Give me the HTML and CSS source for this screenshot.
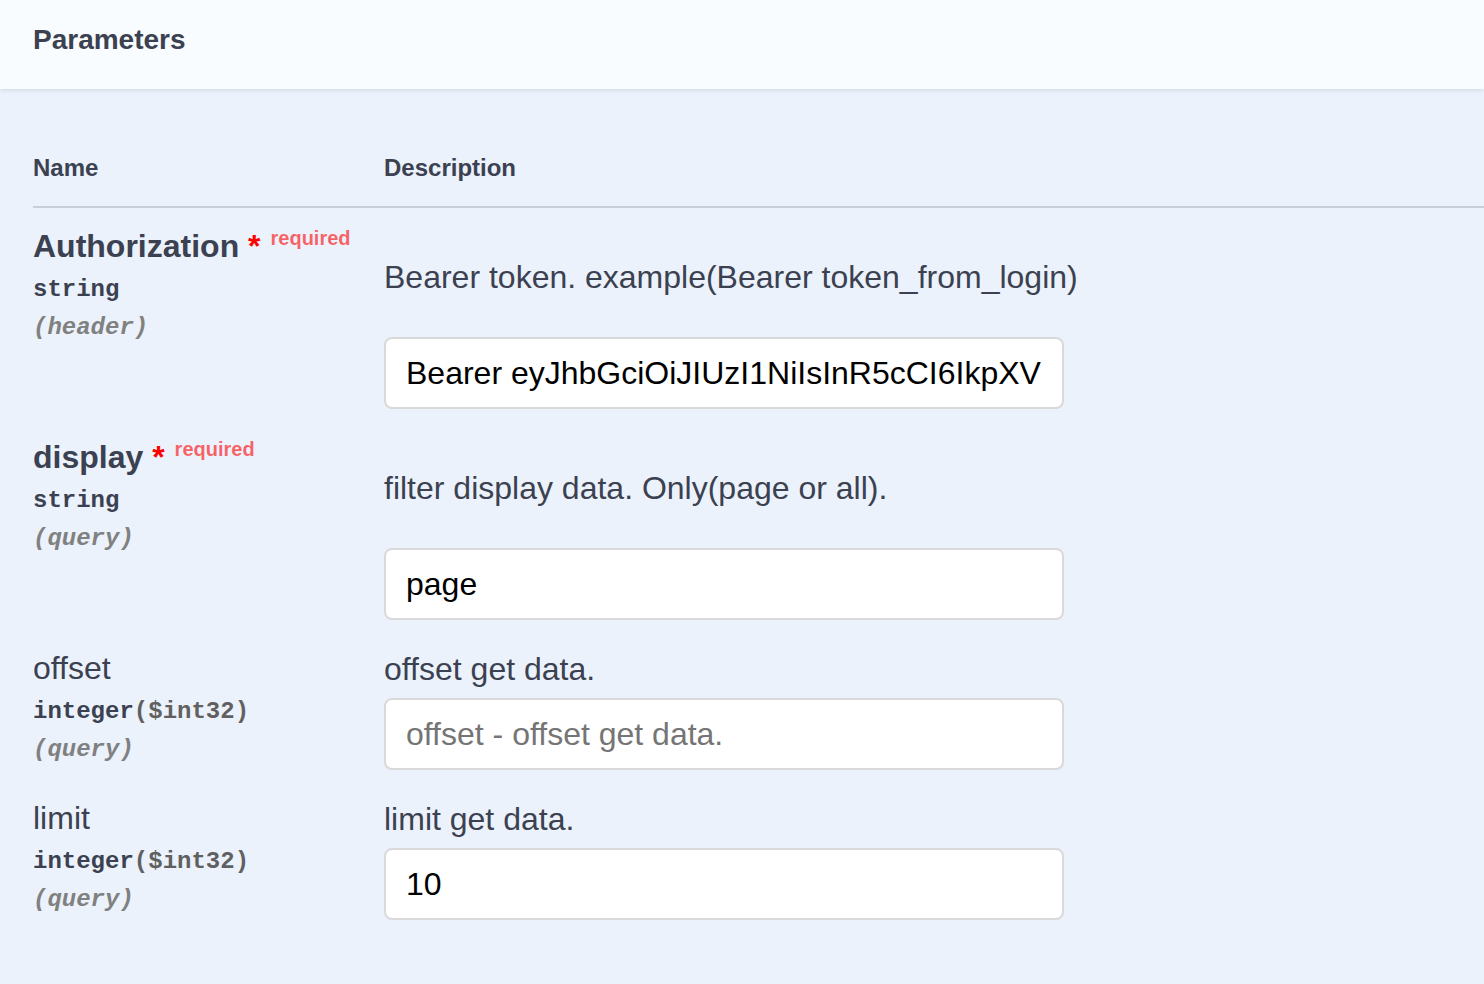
FILE: index.html
```html
<!DOCTYPE html>
<html lang="en">
<head>
<meta charset="utf-8">
<title>Parameters</title>
<link rel="stylesheet" href="styles.css">
</head>
<body>
<div class="section-header">
  <h4 class="title">Parameters</h4>
</div>
<div class="table-container">
  <table class="parameters">
    <thead>
      <tr>
        <th class="col-name">Name</th>
        <th class="col-desc">Description</th>
      </tr>
    </thead>
    <tbody>
      <tr>
        <td class="col-name">
          <div class="param-name required">Authorization<span class="star">&nbsp;*</span><span class="req-label">required</span></div>
          <div class="param-type">string</div>
          <div class="param-in">(header)</div>
        </td>
        <td class="col-desc">
          <div class="markdown"><p>Bearer token. example(Bearer token_from_login)</p></div>
          <input type="text" class="param-input" value="Bearer eyJhbGciOiJIUzI1NiIsInR5cCI6IkpXVCJ9.eyJ1c2VyX2lkIjoxfQ">
        </td>
      </tr>
      <tr>
        <td class="col-name">
          <div class="param-name required">display<span class="star">&nbsp;*</span><span class="req-label">required</span></div>
          <div class="param-type">string</div>
          <div class="param-in">(query)</div>
        </td>
        <td class="col-desc">
          <div class="markdown"><p>filter display data. Only(page or all).</p></div>
          <input type="text" class="param-input" value="page">
        </td>
      </tr>
      <tr>
        <td class="col-name">
          <div class="param-name">offset</div>
          <div class="param-type">integer<span class="prop-format">($int32)</span></div>
          <div class="param-in">(query)</div>
        </td>
        <td class="col-desc">
          <div class="plain-desc">offset get data.</div>
          <input type="text" class="param-input" placeholder="offset - offset get data.">
        </td>
      </tr>
      <tr>
        <td class="col-name">
          <div class="param-name">limit</div>
          <div class="param-type">integer<span class="prop-format">($int32)</span></div>
          <div class="param-in">(query)</div>
        </td>
        <td class="col-desc">
          <div class="plain-desc">limit get data.</div>
          <input type="text" class="param-input" value="10">
        </td>
      </tr>
    </tbody>
  </table>
</div>
</body>
</html>
```
FILE: styles.css
```css
html, body {
  margin: 0;
  padding: 0;
  min-height: 100%;
}

body {
  background: #ebf2fb;
  color: #3b4151;
  font-family: "Liberation Sans", Arial, sans-serif;
  min-height: 984px;
}

.section-header {
  display: flex;
  align-items: center;
  height: 89px;
  box-sizing: border-box;
  padding: 0 33px 10px;
  background: #f9fcfe;
  box-shadow: 0 2px 4px rgba(0, 0, 0, 0.08);
  position: relative;
}

.title {
  margin: 0;
  font-size: 28px;
  font-weight: 700;
  color: #3b4151;
}

.table-container {
  padding: 41px 0 0 33px;
}

.parameters {
  width: 100%;
  border-collapse: collapse;
}

.parameters th {
  text-align: left;
  font-size: 24px;
  font-weight: 700;
  padding: 24px 0;
  border-bottom: 2px solid #c8cfd9;
  color: #3b4151;
}

.parameters th.col-name {
  width: 351px;
}

.parameters td {
  vertical-align: top;
  padding: 20px 0 0;
}

.param-name {
  font-size: 32px;
  font-weight: 400;
  color: #3b4151;
}

.param-name.required {
  font-weight: 700;
}

.star {
  color: #ff0000;
}

.req-label {
  position: relative;
  top: -12px;
  padding: 10px;
  font-size: 20px;
  font-weight: 700;
  color: rgba(255, 0, 0, 0.6);
}

.param-type {
  font-family: "Liberation Mono", "Courier New", monospace;
  font-size: 24px;
  font-weight: 700;
  padding: 11px 0;
  color: #3b4151;
}

.prop-format {
  color: #606060;
}

.param-in {
  font-family: "Liberation Mono", "Courier New", monospace;
  font-size: 24px;
  font-weight: 700;
  font-style: italic;
  color: #808080;
}

.markdown p {
  margin: 31px 0 41px;
  font-size: 32px;
  color: #3b4151;
}

.plain-desc {
  padding-top: 1px;
  font-size: 32px;
  color: #3b4151;
}

.param-input {
  display: block;
  box-sizing: border-box;
  width: 680px;
  height: 72px;
  margin: 10px 0;
  padding: 15px 20px;
  border: 2px solid #d9d9d9;
  border-radius: 8px;
  background: #ffffff;
  font-family: "Liberation Sans", Arial, sans-serif;
  font-size: 32px;
  color: #000000;
  outline: none;
}

.param-input::placeholder {
  color: #757575;
}
```
